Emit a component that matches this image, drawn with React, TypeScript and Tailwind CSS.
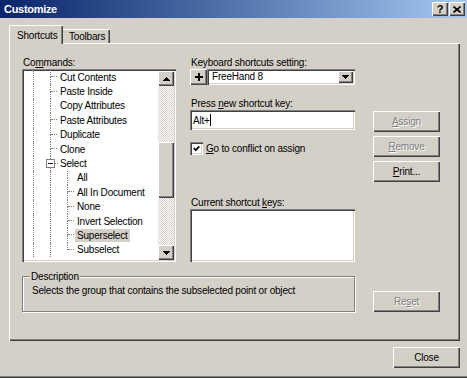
import React from "react";

const raised =
  "bg-[#d4d0c8] shadow-[inset_1px_1px_0_#ffffff,inset_-1px_-1px_0_#404040,inset_-2px_-2px_0_#808080]";
const sunken =
  "bg-white shadow-[inset_1px_1px_0_#808080,inset_2px_2px_0_#404040,inset_-1px_-1px_0_#ffffff,inset_-2px_-2px_0_#d4d0c8]";
const dither =
  "bg-[image:repeating-conic-gradient(#ffffff_0_25%,#d4d0c8_0_50%)] bg-[length:2px_2px]";
const disabledText = "text-[#808080] [text-shadow:1px_1px_0_#ffffff]";
const line = "border-l border-dotted border-[#808080]";

type TreeRow = {
  label: string;
  level: 1 | 2;
  dash?: boolean;
  expander?: boolean;
  selected?: boolean;
  last?: boolean;
};

const rows: TreeRow[] = [
  { label: "Cut Contents", level: 1, dash: true },
  { label: "Paste Inside", level: 1, dash: true },
  { label: "Copy Attributes", level: 1 },
  { label: "Paste Attributes", level: 1, dash: true },
  { label: "Duplicate", level: 1, dash: true },
  { label: "Clone", level: 1, dash: true },
  { label: "Select", level: 1, expander: true },
  { label: "All", level: 2 },
  { label: "All In Document", level: 2, dash: true },
  { label: "None", level: 2, dash: true },
  { label: "Invert Selection", level: 2, dash: true },
  { label: "Superselect", level: 2, dash: true, selected: true },
  { label: "Subselect", level: 2, dash: true, last: true },
];

const Arrow = ({ down }: { down?: boolean }) => (
  <svg width="7" height="4" viewBox="0 0 7 4" shapeRendering="crispEdges">
    <polygon points={down ? "0,0 7,0 3.5,4" : "3.5,0 7,4 0,4"} fill="#000" />
  </svg>
);

const Branch = ({ dash, last }: { dash?: boolean; last?: boolean }) => (
  <div className="w-[8px] shrink-0 self-stretch flex flex-col">
    <div className={`h-1/2 flex items-end ${line}`}>
      {dash && <div className="w-[6px] border-b border-dotted border-[#808080]" />}
    </div>
    <div className={last ? "h-1/2" : `h-1/2 ${line}`} />
  </div>
);

const Row = ({ row }: { row: TreeRow }) => (
  <div className="flex h-[14.4px] items-center whitespace-nowrap">
    <div className="w-[9px] shrink-0" />
    <div className={`w-[17px] shrink-0 self-stretch ${line}`} />
    {row.level === 1 ? (
      row.expander ? (
        <div className={`w-[8px] shrink-0 self-stretch flex items-center ${line}`}>
          <div className="ml-[-5px] w-[9px] h-[9px] shrink-0 border border-[#808080] bg-white flex items-center justify-center">
            <div className="w-[5px] h-px bg-black" />
          </div>
          <div className="w-[3px] shrink-0 border-t border-dotted border-[#808080]" />
        </div>
      ) : (
        <Branch dash={row.dash} />
      )
    ) : (
      <>
        <div className={`w-[17px] shrink-0 self-stretch ${line}`} />
        <Branch dash={row.dash} last={row.last} />
      </>
    )}
    <span className={`px-[2px] leading-[13px] ${row.selected ? "bg-[#d4d0c8]" : ""}`}>
      {row.label}
    </span>
  </div>
);

const Button = ({
  children,
  disabled,
  className = "",
}: {
  children: React.ReactNode;
  disabled?: boolean;
  className?: string;
}) => (
  <div
    className={`w-[67px] h-[21px] shrink-0 flex items-center justify-center ${raised} ${
      disabled ? disabledText : ""
    } ${className}`}
  >
    {children}
  </div>
);

export default function App() {
  return (
    <div className="w-[467px] h-[378px] bg-[#d4d0c8] flex flex-col font-['Liberation_Sans',Arial,sans-serif] text-[10px] tracking-[-0.2px] text-black overflow-hidden shadow-[inset_0_-1px_0_#404040,inset_0_-2px_0_#808080]">
      {/* title bar */}
      <div className="h-[18px] shrink-0 flex items-center bg-linear-to-r from-[#0a246a] to-[#a6caf0] pl-[4px] pr-[2px]">
        <span className="flex-1 text-white font-bold text-[11px] tracking-[-0.3px]">Customize</span>
        <div className={`w-[16px] h-[14px] flex items-center justify-center font-bold text-[11px] ${raised}`}>
          ?
        </div>
        <div className={`ml-[1px] w-[16px] h-[14px] flex items-center justify-center ${raised}`}>
          <svg width="8" height="7" viewBox="0 0 8 7">
            <path d="M0.5 0.5L7.5 6.5M7.5 0.5L0.5 6.5" stroke="#000" strokeWidth="1.6" />
          </svg>
        </div>
      </div>

      <div className="flex-1 flex flex-col pl-[9px] pr-[7px] pt-[7px]">
        {/* tabs */}
        <div className="relative z-10 flex items-end h-[19px] mb-[-1px]">
          <div className="w-[54px] h-[19px] bg-[#d4d0c8] border-t border-l border-white rounded-tl-[2px] shadow-[inset_-1px_0_0_#404040,inset_-2px_0_0_#808080] pl-[7px] pt-[3px] leading-[13px]">
            Shortcuts
          </div>
          <div className="w-[47px] h-[14px] mb-[1px] border-t border-white shadow-[inset_-1px_0_0_#404040,inset_-2px_0_0_#808080] pl-[6px] leading-[13px]">
            Toolbars
          </div>
        </div>

        {/* panel */}
        <div className="h-[298px] shrink-0 border-t border-l border-white shadow-[inset_-1px_-1px_0_#404040,inset_-2px_-2px_0_#808080] flex flex-col pl-[12px]">
          <div className="flex mt-[12px]">
            {/* commands */}
            <div className="w-[154px] shrink-0 flex flex-col">
              <div className="h-[13px] leading-[13px] pl-[1px]">
                Co<u>m</u>mands:
              </div>
              <div className={`h-[193px] p-[2px] flex ${sunken}`}>
                <div className="flex-1 overflow-hidden mt-[-1px]">
                  {rows.map((r) => (
                    <Row key={r.label} row={r} />
                  ))}
                </div>
                <div className="w-[16px] shrink-0 flex flex-col">
                  <div className={`h-[15px] flex items-center justify-center ${raised}`}>
                    <Arrow />
                  </div>
                  <div className={`h-[56px] ${dither}`} />
                  <div className={`h-[56px] ${raised}`} />
                  <div className={`flex-1 ${dither}`} />
                  <div className={`h-[15px] flex items-center justify-center ${raised}`}>
                    <Arrow down />
                  </div>
                </div>
              </div>
            </div>

            {/* middle */}
            <div className="ml-[14px] w-[165px] shrink-0 flex flex-col">
              <div className="h-[13px] leading-[13px] pl-[1px]">Keyboard shortcuts setting:</div>
              <div className="h-[16px] flex">
                <div className={`w-[17px] h-[16px] shrink-0 flex items-center justify-center ${raised}`}>
                  <svg width="8" height="8" viewBox="0 0 8 8" shapeRendering="crispEdges">
                    <rect x="3" y="0" width="2" height="8" fill="#000" />
                    <rect x="0" y="3" width="8" height="2" fill="#000" />
                  </svg>
                </div>
                <div className={`flex-1 flex items-center p-[2px] ${sunken}`}>
                  <span className="flex-1 pl-[3px] leading-[12px]">FreeHand 8</span>
                  <div className={`w-[15px] h-[12px] flex items-center justify-center ${raised}`}>
                    <Arrow down />
                  </div>
                </div>
              </div>
              <div className="mt-[12px] h-[13px] leading-[13px] pl-[1px]">
                Press <u>n</u>ew shortcut key:
              </div>
              <div className={`h-[20px] flex items-center pl-[3px] ${sunken}`}>
                <span className="leading-[13px]">Alt+</span>
                <div className="w-px h-[12px] bg-black" />
              </div>
              <div className="mt-[12px] h-[12px] flex items-center">
                <div className={`w-[13px] h-[13px] shrink-0 flex items-center justify-center ${sunken}`}>
                  <svg width="7" height="7" viewBox="0 0 7 7">
                    <path d="M0.8 3.2L2.7 5.2L6.3 1.3" stroke="#000" strokeWidth="1.7" fill="none" />
                  </svg>
                </div>
                <span className="ml-[3px] leading-[13px]">
                  <u>G</u>o to conflict on assign
                </span>
              </div>
              <div className="mt-[42px] h-[13px] leading-[13px] pl-[1px]">
                Current shortcut <u>k</u>eys:
              </div>
              <div className={`h-[53px] ${sunken}`} />
            </div>

            {/* buttons */}
            <div className="ml-[18px] mt-[55px] flex flex-col gap-[4px]">
              <Button disabled>
                <u>A</u>ssign
              </Button>
              <Button disabled>
                <u>R</u>emove
              </Button>
              <Button>
                <u>P</u>rint...
              </Button>
            </div>
          </div>

          <div className="flex mt-[14px]">
            <div className="relative w-[333px] h-[36px] shrink-0 border border-[#808080] shadow-[1px_1px_0_#ffffff,inset_1px_1px_0_#ffffff] pl-[9px] pt-[7px]">
              <span className="absolute left-[7px] top-[-7px] px-[1px] bg-[#d4d0c8] leading-[13px]">
                Description
              </span>
              <div className="leading-[13px] whitespace-nowrap">
                Selects the group that contains the subselected point or object
              </div>
            </div>
            <Button disabled className="ml-[18px] mt-[15px]">
              Re<u>s</u>et
            </Button>
          </div>
        </div>

        <div className="flex justify-end mt-[6px]">
          <Button>Close</Button>
        </div>
      </div>
    </div>
  );
}
